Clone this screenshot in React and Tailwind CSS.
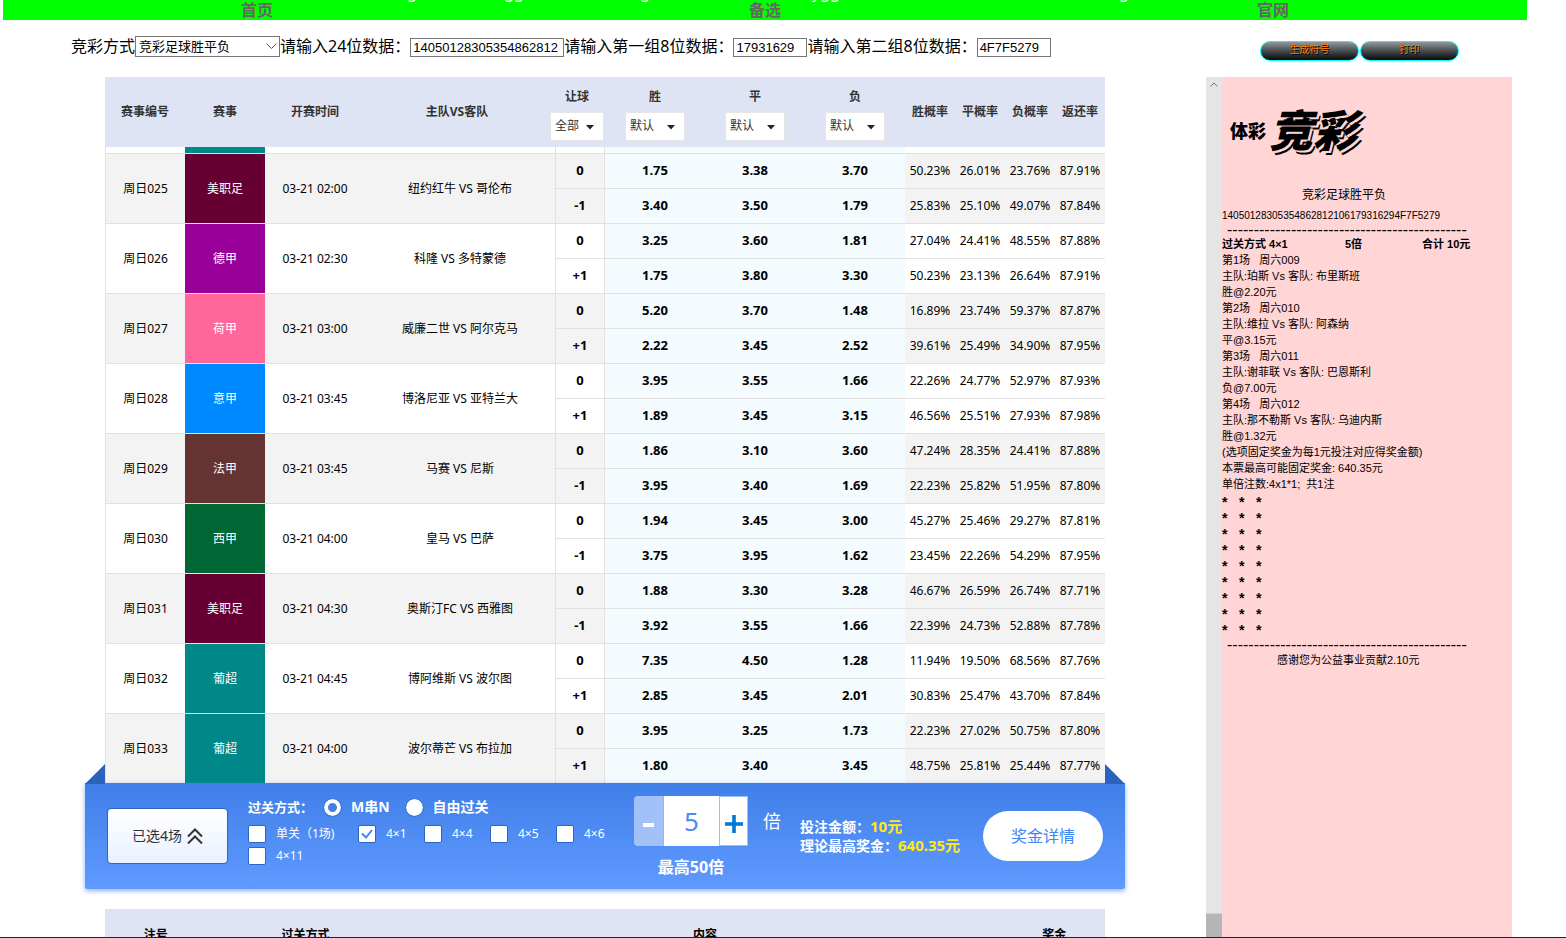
import { useState } from 'react';

const NAV_LINKS = ['首页', '备选', '官网'];

const LEAGUE_COLORS = {
  美职足: 'bg-[#660033]',
  德甲: 'bg-[#990099]',
  荷甲: 'bg-[#ff6699]',
  意甲: 'bg-[#0088ff]',
  法甲: 'bg-[#663333]',
  西甲: 'bg-[#006633]',
  葡超: 'bg-[#008888]',
};

// lines: [让球, 胜, 平, 负, 胜概率, 平概率, 负概率, 返还率]
const MATCHES = [
  { no: '周日025', league: '美职足', time: '03-21 02:00', teams: '纽约红牛 VS 哥伦布', lines: [
    ['0', '1.75', '3.38', '3.70', '50.23%', '26.01%', '23.76%', '87.91%'],
    ['-1', '3.40', '3.50', '1.79', '25.83%', '25.10%', '49.07%', '87.84%'],
  ] },
  { no: '周日026', league: '德甲', time: '03-21 02:30', teams: '科隆 VS 多特蒙德', lines: [
    ['0', '3.25', '3.60', '1.81', '27.04%', '24.41%', '48.55%', '87.88%'],
    ['+1', '1.75', '3.80', '3.30', '50.23%', '23.13%', '26.64%', '87.91%'],
  ] },
  { no: '周日027', league: '荷甲', time: '03-21 03:00', teams: '威廉二世 VS 阿尔克马', lines: [
    ['0', '5.20', '3.70', '1.48', '16.89%', '23.74%', '59.37%', '87.87%'],
    ['+1', '2.22', '3.45', '2.52', '39.61%', '25.49%', '34.90%', '87.95%'],
  ] },
  { no: '周日028', league: '意甲', time: '03-21 03:45', teams: '博洛尼亚 VS 亚特兰大', lines: [
    ['0', '3.95', '3.55', '1.66', '22.26%', '24.77%', '52.97%', '87.93%'],
    ['+1', '1.89', '3.45', '3.15', '46.56%', '25.51%', '27.93%', '87.98%'],
  ] },
  { no: '周日029', league: '法甲', time: '03-21 03:45', teams: '马赛 VS 尼斯', lines: [
    ['0', '1.86', '3.10', '3.60', '47.24%', '28.35%', '24.41%', '87.88%'],
    ['-1', '3.95', '3.40', '1.69', '22.23%', '25.82%', '51.95%', '87.80%'],
  ] },
  { no: '周日030', league: '西甲', time: '03-21 04:00', teams: '皇马 VS 巴萨', lines: [
    ['0', '1.94', '3.45', '3.00', '45.27%', '25.46%', '29.27%', '87.81%'],
    ['-1', '3.75', '3.95', '1.62', '23.45%', '22.26%', '54.29%', '87.95%'],
  ] },
  { no: '周日031', league: '美职足', time: '03-21 04:30', teams: '奥斯汀FC VS 西雅图', lines: [
    ['0', '1.88', '3.30', '3.28', '46.67%', '26.59%', '26.74%', '87.71%'],
    ['-1', '3.92', '3.55', '1.66', '22.39%', '24.73%', '52.88%', '87.78%'],
  ] },
  { no: '周日032', league: '葡超', time: '03-21 04:45', teams: '博阿维斯 VS 波尔图', lines: [
    ['0', '7.35', '4.50', '1.28', '11.94%', '19.50%', '68.56%', '87.76%'],
    ['+1', '2.85', '3.45', '2.01', '30.83%', '25.47%', '43.70%', '87.84%'],
  ] },
  { no: '周日033', league: '葡超', time: '03-21 04:00', teams: '波尔蒂芒 VS 布拉加', lines: [
    ['0', '3.95', '3.25', '1.73', '22.23%', '27.02%', '50.75%', '87.80%'],
    ['+1', '1.80', '3.40', '3.45', '48.75%', '25.81%', '25.44%', '87.77%'],
  ] },
];

const TICKET_LINES = [
  '第1场   周六009',
  '主队:珀斯 Vs 客队: 布里斯班',
  '胜@2.20元',
  '第2场   周六010',
  '主队:维拉 Vs 客队: 阿森纳',
  '平@3.15元',
  '第3场   周六011',
  '主队:谢菲联 Vs 客队: 巴恩斯利',
  '负@7.00元',
  '第4场   周六012',
  '主队:那不勒斯 Vs 客队: 乌迪内斯',
  '胜@1.32元',
  '(选项固定奖金为每1元投注对应得奖金额)',
  '本票最高可能固定奖金: 640.35元',
  '单倍注数:4x1*1;  共1注',
];

const PASS_TYPES = ['单关（1场)', '4×1', '4×4', '4×5', '4×6', '4×11'];

function TopNav() {
  return (
    <nav className="ml-[3px] mr-[39px] h-5 bg-[#00ff00]">
      {/* Tail of the address line that is scrolled off */}
      <div className="flex h-0 items-end pl-[404px] text-base leading-4 text-white">
        <span className="w-[97px]">g</span>
        <span className="w-[136px]">gg</span>
        <span className="w-[45px]">g</span>
        <span className="w-[127px]">,,</span>
        <span className="w-[307px]">ygg</span>
        <span className="w-[118px]">g</span>
        <span>,</span>
      </div>
      <ul className="grid grid-cols-3 text-center text-base font-bold leading-5 text-[#666666]">
        {NAV_LINKS.map((label) => (
          <li key={label}>
            <a href="#">{label}</a>
          </li>
        ))}
      </ul>
    </nav>
  );
}

function GlossyButton({ children }) {
  return (
    <button
      type="button"
      className="h-5 w-[99px] rounded-full border border-[#00ffff] bg-linear-to-b from-[#8f9a9e] to-[#0a0a0a] pb-1 text-[10px] leading-3 text-[#ff7a00] [text-shadow:1px_1px_0_#000]"
    >
      {children}
    </button>
  );
}

function Toolbar() {
  const inputClass = 'h-[19px] border border-[#767676] bg-white px-[2px] font-["Liberation_Sans",sans-serif] text-[13px] text-black';

  return (
    <div className="flex h-[57px] items-start justify-between pl-[71px] pr-[107px] pt-4">
      <form className="flex items-end whitespace-nowrap text-base leading-[21px] text-black">
        <label htmlFor="mode">竞彩方式</label>
        <span className="relative">
          <select
            id="mode"
            className="block h-[21px] w-[145px] appearance-none border border-[#767676] bg-white pl-[3px] pb-[2px] text-[13px] leading-4"
          >
            <option>竞彩足球胜平负</option>
          </select>
          <svg className="pointer-events-none absolute right-[3px] top-[6px] h-[8px] w-[11px]" viewBox="0 0 11 8" fill="none" stroke="#555">
            <path d="M0.5 1.5 5.5 6.5 10.5 1.5" />
          </svg>
        </span>
        <label htmlFor="code24">请输入24位数据：</label>
        <input id="code24" className={`${inputClass} w-[154px]`} defaultValue="14050128305354862812" />
        <label htmlFor="code8a">请输入第一组8位数据：</label>
        <input id="code8a" className={`${inputClass} w-[74px]`} defaultValue="17931629" />
        <label htmlFor="code8b">请输入第二组8位数据：</label>
        <input id="code8b" className={`${inputClass} w-[74px]`} defaultValue="4F7F5279" />
      </form>
      <div className="flex gap-px pt-[5px]">
        <GlossyButton>生成符号</GlossyButton>
        <GlossyButton>打印</GlossyButton>
      </div>
    </div>
  );
}

function FilterHead({ label, option, wide }) {
  return (
    <th className="p-0 align-top">
      <label className="flex flex-col items-center gap-[6px] pt-[11px]">
        <span className="leading-[18px]">{label}</span>
        <span className="relative">
          <select
            className={`block h-[29px] appearance-none border border-[#e6e6e6] bg-white pl-1 pb-[2px] text-xs font-normal text-[#333333] ${
              wide ? 'w-[60px]' : 'w-[54px]'
            }`}
          >
            <option>{option}</option>
          </select>
          <svg className="pointer-events-none absolute right-[10px] top-[13px] h-[5px] w-[8px]" viewBox="0 0 8 5" fill="#222">
            <path d="M0 0h8L4 4.5z" />
          </svg>
        </span>
      </label>
    </th>
  );
}

function OddsHeader() {
  return (
    <table className="w-full table-fixed border-separate border-spacing-0 bg-[#dfe4f5] text-xs text-[#333333]">
      <colgroup>
        <col className="w-[80px]" />
        <col className="w-[80px]" />
        <col className="w-[100px]" />
        <col />
        <col className="w-[56px]" />
        <col className="w-[100px]" />
        <col className="w-[100px]" />
        <col className="w-[100px]" />
        <col className="w-[50px]" />
        <col className="w-[50px]" />
        <col className="w-[50px]" />
        <col className="w-[50px]" />
      </colgroup>
      <thead>
        <tr className="h-[70px]">
          <th>赛事编号</th>
          <th>赛事</th>
          <th>开赛时间</th>
          <th>主队VS客队</th>
          <FilterHead label="让球" option="全部" />
          <FilterHead label="胜" option="默认" wide />
          <FilterHead label="平" option="默认" wide />
          <FilterHead label="负" option="默认" wide />
          <th className="p-0">胜概率</th>
          <th className="p-0">平概率</th>
          <th className="p-0">负概率</th>
          <th className="p-0">返还率</th>
        </tr>
      </thead>
    </table>
  );
}

function LineCells({ line }) {
  const [handicap, ...rest] = line;
  return (
    <>
      <td className="border-x border-t border-[#e1e1e1] p-0 text-[13px] font-bold">{handicap}</td>
      {rest.slice(0, 3).map((odd, i) => (
        <td key={i} className="border-t border-[#e1e1e1] bg-[#f3fbff] p-0 text-[13px] font-bold">
          {odd}
        </td>
      ))}
      {rest.slice(3).map((rate, i) => (
        <td key={i} className="border-t border-[#e1e1e1] p-0">{rate}</td>
      ))}
    </>
  );
}

function OddsTable() {
  return (
    <table className="w-full table-fixed border-separate border-spacing-0 border-l border-[#e1e1e1] text-center text-xs text-black">
      <colgroup>
        <col className="w-[79px]" />
        <col className="w-[80px]" />
        <col className="w-[100px]" />
        <col />
        <col className="w-[50px]" />
        <col className="w-[100px]" />
        <col className="w-[100px]" />
        <col className="w-[100px]" />
        <col className="w-[50px]" />
        <col className="w-[50px]" />
        <col className="w-[50px]" />
        <col className="w-[50px]" />
      </colgroup>
      {/* Bottom edge of the row above the scroll position */}
      <tbody>
        <tr className="h-[6px]">
          <td className="p-0" />
          <td className="bg-[#008888] p-0" />
          <td className="p-0" colSpan={2} />
          <td className="border-x border-[#e1e1e1] p-0" />
          <td className="bg-[#f3fbff] p-0" colSpan={3} />
          <td className="p-0" colSpan={4} />
        </tr>
      </tbody>
      {MATCHES.map((match, i) => (
        <tbody key={match.no} className={i % 2 === 0 ? 'bg-[#f3f3f3]' : 'bg-white'}>
          <tr className="h-[35px]">
            <td rowSpan={2} className="border-t border-[#e1e1e1] p-0">{match.no}</td>
            <td rowSpan={2} className={`border-t border-[#e1e1e1] p-0 text-white ${LEAGUE_COLORS[match.league]}`}>
              {match.league}
            </td>
            <td rowSpan={2} className="border-t border-[#e1e1e1] p-0">{match.time}</td>
            <td rowSpan={2} className="border-t border-[#e1e1e1] p-0">{match.teams}</td>
            <LineCells line={match.lines[0]} />
          </tr>
          <tr className="h-[35px]">
            <LineCells line={match.lines[1]} />
          </tr>
        </tbody>
      ))}
    </table>
  );
}

function PassOptions() {
  const [mode, setMode] = useState('M串N');
  const [passes, setPasses] = useState(['4×1']);

  const togglePass = (name) => {
    setPasses((prev) => (prev.includes(name) ? prev.filter((p) => p !== name) : [...prev, name]));
  };

  return (
    <div className="w-[386px] pt-[14px]">
      <div className="flex h-5 items-center text-sm font-bold">
        <span className="w-[76px] text-[13px]">过关方式：</span>
        {['M串N', '自由过关'].map((name) => (
          <label key={name} className="mr-4 flex items-center gap-[10px]">
            <input
              type="radio"
              name="mode"
              checked={mode === name}
              onChange={() => setMode(name)}
              className="h-[17px] w-[17px] appearance-none rounded-full border-white bg-white outline outline-[#3a76d8] checked:border-4 checked:bg-[#3f80ea]"
            />
            {name}
          </label>
        ))}
      </div>
      <div className="flex flex-wrap pt-[6px] text-xs">
        {PASS_TYPES.map((name, i) => (
          <label
            key={name}
            className={`flex h-[22px] items-center gap-[10px] whitespace-nowrap ${i === 0 ? 'w-[110px]' : 'w-[66px]'}`}
          >
            <span className="relative">
              <input
                type="checkbox"
                checked={passes.includes(name)}
                onChange={() => togglePass(name)}
                className="peer block h-[18px] w-[18px] appearance-none rounded-xs border border-[#2b66c5] bg-white"
              />
              <svg
                className="pointer-events-none absolute left-[3px] top-1 hidden h-[10px] w-3 peer-checked:block"
                viewBox="0 0 12 10"
                fill="none"
                stroke="#4385f0"
                strokeWidth="2"
              >
                <path d="M1 4.5 5 8.5 11 1" />
              </svg>
            </span>
            {name}
          </label>
        ))}
      </div>
    </div>
  );
}

function Stepper() {
  const [times, setTimes] = useState(5);

  return (
    <div className="w-[114px] pt-[13px]">
      <div className="flex h-[50px]">
        <button
          type="button"
          aria-label="减少"
          onClick={() => setTimes(Math.max(1, times - 1))}
          className="flex w-[30px] items-center justify-center rounded-l-sm border-r border-[#8fb4f7] bg-[#a3c1f9]"
        >
          <svg className="mt-2 h-1 w-[11px]" viewBox="0 0 11 4" fill="#fff">
            <path d="M0 0h11v4H0z" />
          </svg>
        </button>
        <input
          aria-label="倍数"
          value={times}
          onChange={(e) => setTimes(Number(e.target.value) || 1)}
          className="w-[55px] bg-white text-center text-[26px] text-[#4b8bf3]"
        />
        <button
          type="button"
          aria-label="增加"
          onClick={() => setTimes(Math.min(50, times + 1))}
          className="flex w-[29px] items-center justify-center border border-[#9dbdf5] bg-white"
        >
          <svg className="mt-[6px] h-[18px] w-[18px]" viewBox="0 0 18 18" fill="#0078d7">
            <path d="M7.2 0h3.6v7.2H18v3.6h-7.2V18H7.2v-7.2H0V7.2h7.2z" />
          </svg>
        </button>
      </div>
      <p className="pt-[11px] text-center text-base font-bold leading-5">最高50倍</p>
    </div>
  );
}

function BetBar() {
  return (
    <section className="relative flex h-[106px] rounded-b-xs bg-linear-to-b from-[#3f7fe8] to-[#5f9aff] pl-[22px] text-white shadow-[0_2px_5px_rgba(63,127,232,0.6)]">
      {/* Folded corners behind the table */}
      <svg className="absolute -top-[19px] left-0 h-5 w-5" viewBox="0 0 20 20" fill="#2a62bc">
        <path d="M20 0v20H0z" />
      </svg>
      <svg className="absolute -top-[19px] right-0 h-5 w-5" viewBox="0 0 20 20" fill="#2a62bc">
        <path d="M0 0v20h20z" />
      </svg>

      <button
        type="button"
        className="mr-5 mt-[25px] flex h-[56px] w-[121px] items-center justify-center gap-[5px] rounded-sm border border-[#2b66c5] bg-linear-to-b from-white to-[#e9f0ff] text-sm text-[#333333]"
      >
        已选4场
        <svg className="h-4 w-4" viewBox="0 0 16 16" fill="none" stroke="#333" strokeWidth="2">
          <path d="M1 8.5 8 1.5l7 7M1 15.5l7-7 7 7" />
        </svg>
      </button>
      <PassOptions />
      <Stepper />
      <span className="ml-[15px] w-[37px] pt-[28px] text-lg leading-5">倍</span>
      <div className="w-[183px] pt-[34px] text-sm font-bold leading-[19px]">
        <p>
          投注金额：<span className="text-[15px] text-[#ffe81a]">10元</span>
        </p>
        <p>
          理论最高奖金：<span className="text-[15px] text-[#ffe81a]">640.35元</span>
        </p>
      </div>
      <button type="button" className="mt-[28px] h-[50px] w-[120px] rounded-full bg-white text-base text-[#3f86f5]">
        奖金详情
      </button>
    </section>
  );
}

function PrizeTable() {
  return (
    <table className="mt-5 w-full table-fixed border border-[#e1e1e1] bg-[#dfe4f5] text-xs text-black">
      <thead>
        <tr className="h-[50px]">
          <th className="w-[100px]">注号</th>
          <th className="w-[200px]">过关方式</th>
          <th>内容</th>
          <th className="w-[100px]">奖金</th>
        </tr>
      </thead>
    </table>
  );
}

function Ticket() {
  const rule = '-'.repeat(45);

  return (
    <aside className="flex w-[306px] shrink-0 bg-[#ffd5d5]">
      <div className="flex w-4 flex-col justify-between bg-[#e5e5e5]">
        <svg className="mx-1 mt-[5px] h-[6px] w-2" viewBox="0 0 8 6" fill="none" stroke="#777">
          <path d="M0.5 4.5 4 1l3.5 3.5" />
        </svg>
        <div className="h-6 border-t border-[#d0d0d0] bg-[#b5b5b5]" />
      </div>
      <div className="flex-1 whitespace-pre font-['Liberation_Sans','Noto_Sans_CJK_SC',sans-serif] text-[11px] leading-4 text-black">
        <div className="flex h-[110px] items-center gap-[3px] pl-2 font-black">
          <span className="text-lg">体彩</span>
          <span className="text-[44px] italic leading-[44px] [text-shadow:2px_2px_0_#ffd5d5,3px_4px_0_#000]">竞彩</span>
        </div>
        <p className="pl-[80px] text-xs leading-4">竞彩足球胜平负</p>
        <p className="pt-[5px] text-[10px] leading-4">140501283053548628121061793162{'94F7F5279'}</p>
        <p className="pl-[5px] text-base leading-3">{rule}</p>
        <div className="flex font-bold">
          <span className="w-[123px]">过关方式 4×1</span>
          <span className="w-[77px]">5倍</span>
          <span>合计 10元</span>
        </div>
        {TICKET_LINES.map((line) => (
          <p key={line}>{line}</p>
        ))}
        <div className="pt-[2px] text-sm font-bold leading-4">
          {Array.from({ length: 9 }, (_, i) => (
            <p key={i} className="flex">
              <span className="w-[17px]">*</span>
              <span className="w-[17px]">*</span>
              <span>*</span>
            </p>
          ))}
        </div>
        <p className="pl-[5px] text-base leading-[14px]">{rule}</p>
        <p className="pl-[55px]">感谢您为公益事业贡献2.10元</p>
      </div>
    </aside>
  );
}

export default function App() {
  return (
    <div className="flex h-screen flex-col overflow-hidden border-b border-[#2a1f28] bg-white font-['Noto_Sans','Noto_Sans_CJK_SC',sans-serif]">
      <TopNav />
      <Toolbar />
      <div className="flex min-h-0 flex-1 justify-between pl-[85px] pr-[54px]">
        <main className="w-[1040px] shrink-0">
          <div className="px-5">
            <OddsHeader />
            <OddsTable />
          </div>
          <BetBar />
          <div className="px-5">
            <PrizeTable />
          </div>
        </main>
        <Ticket />
      </div>
    </div>
  );
}
